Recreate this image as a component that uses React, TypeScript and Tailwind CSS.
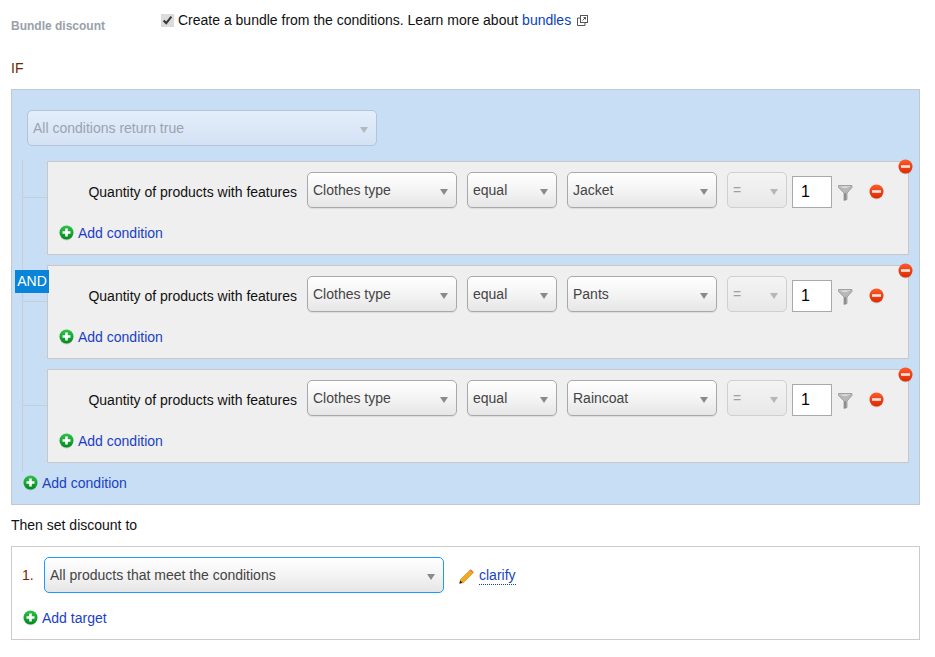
import { useId } from 'react';

function Arrow({ muted }: { muted?: boolean }) {
  return (
    <svg width="8" height="6" viewBox="0 0 8 6" className="absolute right-[8px] top-[16px]">
      <path d="M0 0h8L4 6z" fill={muted ? '#b4b8bc' : '#8a8a8a'} />
    </svg>
  );
}

function Select({ label, width }: { label: string; width: string }) {
  return (
    <div
      className={`relative ${width} h-9 shrink-0 rounded-[5px] border border-[#a9a9a9] bg-gradient-to-b from-white via-[#f4f4f4] to-[#e6e6e6] pl-[5px] text-[14px] leading-[35px] text-[#444] shadow-[0_1px_1px_rgba(0,0,0,0.08)]`}
    >
      {label}
      <Arrow />
    </div>
  );
}

function PlusIcon() {
  const id = useId();
  return (
    <svg width="15" height="16" viewBox="0 0 15 16" className="shrink-0">
      <defs>
        <linearGradient id={id} x1="0" y1="0" x2="0" y2="1">
          <stop offset="0" stopColor="#2fc24a" />
          <stop offset="1" stopColor="#008a1e" />
        </linearGradient>
      </defs>
      <circle cx="7.5" cy="8.6" r="6.8" fill="#000" opacity="0.15" />
      <circle cx="7.5" cy="7.5" r="7" fill={`url(#${id})`} />
      <path d="M6.2 3.5h2.6v2.7h2.7v2.6H8.800v2.700H6.200V8.800H3.500V6.200h2.700z" fill="#fff" />
    </svg>
  );
}

function MinusIcon() {
  const id = useId();
  return (
    <svg width="15" height="16" viewBox="0 0 15 16">
      <defs>
        <linearGradient id={id} x1="0" y1="0" x2="0" y2="1">
          <stop offset="0" stopColor="#ff5a2a" />
          <stop offset="1" stopColor="#dd2a00" />
        </linearGradient>
      </defs>
      <circle cx="7.5" cy="8.600" r="6.800" fill="#000" opacity="0.15" />
      <circle cx="7.500" cy="7.500" r="7" fill={`url(#${id})`} />
      <rect x="3" y="6.200" width="9" height="2.600" fill="#f4e4e0" />
    </svg>
  );
}

function FunnelIcon() {
  return (
    <svg width="15" height="16" viewBox="0 0 15 16">
      <path d="M0.500 0.500h13.500v2L9 8v6.500l-3 1V8L0.500 2.500z" fill="#b8b8b8" stroke="#949494" strokeWidth="0.800" />
      <path d="M2 1.400h10.500L8.500 2.800H5.500z" fill="#ececec" />
      <rect x="6.600" y="8" width="1" height="7" fill="#6e6e6e" />
    </svg>
  );
}

function PencilIcon() {
  return (
    <svg width="15" height="15" viewBox="0 0 15 15">
      <path d="M0.500 14.500l1-4L10.800 1.200l3 3L4.500 13.500z" fill="#f5a81c" stroke="#c77c00" strokeWidth="0.500" />
      <path d="M10.800 1.200l1-1 3 3-1 1z" fill="#e56a5a" />
      <path d="M0.500 14.500l0.700-3 2.300 2.300z" fill="#222" />
    </svg>
  );
}

function ExternalIcon() {
  return (
    <svg width="11" height="11" viewBox="0 0 11 11" fill="none" stroke="#555" strokeWidth="1">
      <rect x="3.500" y="0.500" width="7" height="7" fill="#fff" />
      <path d="M3 3H0.500v7.500H8V8" />
      <path d="M5.500 5.500L8.500 2.500M6.500 2.500h2v2" />
    </svg>
  );
}

function AddLink({ label, className }: { label: string; className?: string }) {
  return (
    <div className={`flex h-5 items-center gap-1 ${className ?? ''}`}>
      <PlusIcon />
      <a className="text-[14px] text-[#1a3fc4]">{label}</a>
    </div>
  );
}

function ConditionCard({ value }: { value: string }) {
  return (
    <div className="relative h-[94px] border border-[#c8c8c8] bg-[#efefef] pt-[10px]">
      <div className="flex items-start">
        <span className="mr-[10px] w-[249px] pt-[10px] text-right text-[14px] leading-5 text-[#111]">
          Quantity of products with features
        </span>
        <Select label="Clothes type" width="w-[150px]" />
        <div className="ml-[10px]">
          <Select label="equal" width="w-[90px]" />
        </div>
        <div className="ml-[10px]">
          <Select label={value} width="w-[150px]" />
        </div>
        <div className="relative ml-[10px] h-9 w-[60px] rounded-[5px] border border-[#cfcfcf] bg-gradient-to-b from-[#f4f4f4] to-[#e8e8e8] pl-[5px] text-[14px] leading-[35px] text-[#a0a0a0]">
          =
          <Arrow muted />
        </div>
        <input
          readOnly
          value="1"
          className="ml-[5px] mt-1 h-8 w-10 border border-[#a9a9a9] bg-white pl-2 font-['Liberation_Sans',sans-serif] text-[16px] text-black outline-none"
        />
        <span className="ml-[6px] mt-[13px] flex">
          <FunnelIcon />
        </span>
        <span className="ml-[16px] mt-[12px] flex">
          <MinusIcon />
        </span>
      </div>
      <AddLink label="Add condition" className="ml-[11px] mt-[15px]" />
      <span className="absolute -right-[5px] -top-[3px] flex">
        <MinusIcon />
      </span>
    </div>
  );
}

export default function App() {
  return (
    <div className="h-[657px] w-[935px] overflow-hidden bg-white pl-[11px] pr-[15px] font-['Liberation_Sans',Arial,sans-serif] text-[14px] text-[#111]">
      <div className="flex h-[58px] items-start">
        <span className="mt-[18px] w-[150px] text-[12px] font-bold leading-4 text-[#99a0a8]">Bundle discount</span>
        <label className="mt-[10px] flex items-center gap-[4px] leading-5">
          <input
            type="checkbox"
            defaultChecked
            readOnly
            className="mt-px h-[13px] w-[13px] accent-[#dcdcdc]"
          />
          <span>Create a bundle from the conditions. Learn more about</span>
          <a className="text-[#0a3fc4]">bundles</a>
          <span className="ml-[2px] flex">
            <ExternalIcon />
          </span>
        </label>
      </div>
      <div className="h-[31px] leading-5 text-[#6a2800]">IF</div>

      <div className="relative h-[416px] border border-[#bfc9d4] bg-[#c7def5] pl-[35px] pr-[10px] pt-[20px]">
        <div className="relative -ml-5 h-9 w-[350px] rounded-[5px] border border-[#b4c4d8] bg-gradient-to-b from-[#e4eefb] to-[#d3e2f4] pl-[5px] leading-[35px] text-[#9aa3ad]">
          All conditions return true
          <Arrow muted />
        </div>

        {/* tree lines */}
        <div className="absolute bottom-[32px] left-[10px] top-[70px] w-px bg-[#c4ced8]" />
        <div className="absolute left-[10px] top-[107px] h-px w-[25px] bg-[#c4ced8]" />
        <div className="absolute left-[10px] top-[211px] h-px w-[25px] bg-[#c4ced8]" />
        <div className="absolute left-[10px] top-[315px] h-px w-[25px] bg-[#c4ced8]" />
        <div className="absolute left-[3px] top-[180px] z-10 h-[23px] w-[34px] bg-[#0a84d8] text-center leading-[23px] text-white">
          AND
        </div>

        <div className="mt-[15px] flex flex-col gap-[10px]">
          <ConditionCard value="Jacket" />
          <ConditionCard value="Pants" />
          <ConditionCard value="Raincoat" />
        </div>
        <AddLink label="Add condition" className="-ml-6 mt-[10px]" />
      </div>

      <div className="mt-[10px] h-[31px] leading-5">Then set discount to</div>

      <div className="h-[94px] border border-[#cccccc] bg-white pl-[10px] pt-[10px]">
        <div className="flex items-start">
          <span className="w-[22px] pt-[8px] leading-5 text-[#7a1e00]">1.</span>
          <div className="relative h-9 w-[400px] rounded-[5px] border border-[#1a9bff] bg-gradient-to-b from-white via-[#f4f4f4] to-[#e6e6e6] pl-[5px] leading-[35px] text-[#444]">
            All products that meet the conditions
            <Arrow />
          </div>
          <span className="ml-[15px] mt-[12px] flex">
            <PencilIcon />
          </span>
          <a className="ml-[5px] mt-[9px] border-b border-dotted border-[#0a3fc4] leading-[18px] text-[#1a3fc4]">clarify</a>
        </div>
        <AddLink label="Add target" className="ml-px mt-[15px]" />
      </div>
    </div>
  );
}
